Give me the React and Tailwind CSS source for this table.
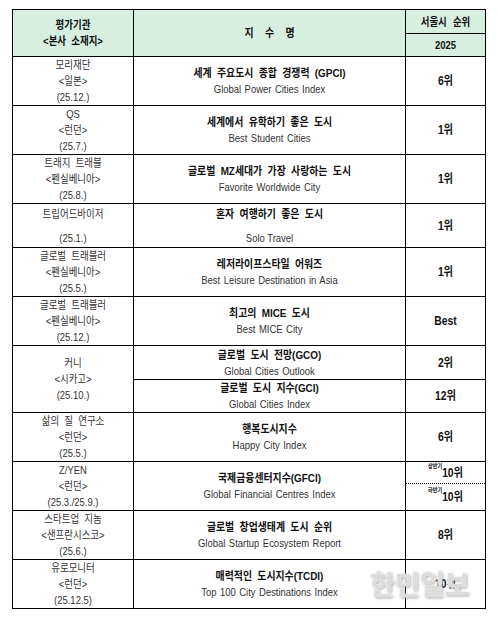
import React from 'react';

const cell = 'border border-black p-0 text-center align-middle';

const Sq = ({ className = '', children }) => (
  <div className={`scale-x-[0.86] leading-[16px] ${className}`}>{children}</div>
);

const Org = ({ lines }) => (
  <Sq className="text-[11px] text-[#333] [word-spacing:3px]">
    {lines.map((l, i) => (
      <div key={i}>{l}</div>
    ))}
  </Sq>
);

const Title = ({ ko, en }) => (
  <Sq>
    <div className="text-[11.5px] font-bold text-[#111] [word-spacing:3px]">{ko}</div>
    <div className="text-[11px] text-[#333] [word-spacing:1px]">{en}</div>
  </Sq>
);

const Rank = ({ children }) => (
  <Sq className="text-[12px] font-bold text-[#111]">{children}</Sq>
);

const rows = [
  { org: ['모리재단', '<일본>', '(25.12.)'], ko: '세계 주요도시 종합 경쟁력 (GPCI)', en: 'Global Power Cities Index', rank: '6위' },
  { org: ['QS', '<런던>', '(25.7.)'], ko: '세계에서 유학하기 좋은 도시', en: 'Best Student Cities', rank: '1위' },
  { org: ['트래지 트래블', '<펜실베니아>', '(25.8.)'], ko: '글로벌 MZ세대가 가장 사랑하는 도시', en: 'Favorite Worldwide City', rank: '1위' },
];

const rows2 = [
  { org: ['글로벌 트래블러', '<펜실베니아>', '(25.5.)'], ko: '레저라이프스타일 어워즈', en: 'Best Leisure Destination in Asia', rank: '1위' },
  { org: ['글로벌 트래블러', '<펜실베니아>', '(25.12.)'], ko: '최고의 MICE 도시', en: 'Best MICE City', rank: 'Best' },
];

export default function App() {
  return (
    <div className="relative min-h-[620px] bg-white pl-[12px] pt-[9px] font-['Liberation_Sans','Noto_Sans_CJK_KR',sans-serif]">
      <table className="w-[473px] table-fixed border-collapse border border-black">
        <colgroup>
          <col className="w-[121px]" />
          <col className="w-[272px]" />
          <col className="w-[80px]" />
        </colgroup>
        <tbody>
          <tr className="h-[24px] bg-[#d6efe0]">
            <td rowSpan={2} className={cell}>
              <Sq className="text-[11px] font-bold text-[#111] leading-[15px] [word-spacing:3px]">
                <div>평가기관</div>
                <div>&lt;본사 소재지&gt;</div>
              </Sq>
            </td>
            <td rowSpan={2} className={cell}>
              <Sq className="text-[11.5px] font-bold text-[#111] [word-spacing:10px]">지 수 명</Sq>
            </td>
            <td className={cell}>
              <Sq className="text-[11px] font-bold text-[#111] [word-spacing:4px]">서울시 순위</Sq>
            </td>
          </tr>
          <tr className="h-[23px] bg-[#d6efe0]">
            <td className={cell}>
              <Sq className="text-[11px] font-bold text-[#111]">2025</Sq>
            </td>
          </tr>

          {rows.map((r, i) => (
            <tr key={i} className="h-[49px]">
              <td className={cell}><Org lines={r.org} /></td>
              <td className={cell}><Title ko={r.ko} en={r.en} /></td>
              <td className={cell}><Rank>{r.rank}</Rank></td>
            </tr>
          ))}

          <tr className="h-[44px]">
            <td className={cell}>
              <Sq className="text-[11px] text-[#333] [word-spacing:3px]">
                <div>트립어드바이저</div>
                <div className="h-[8px]" />
                <div>(25.1.)</div>
              </Sq>
            </td>
            <td className={cell}>
              <Sq>
                <div className="text-[11.5px] font-bold text-[#111] [word-spacing:3px]">혼자 여행하기 좋은 도시</div>
                <div className="h-[8px]" />
                <div className="text-[11px] text-[#333]">Solo Travel</div>
              </Sq>
            </td>
            <td className={cell}><Rank>1위</Rank></td>
          </tr>

          {rows2.map((r, i) => (
            <tr key={i} className="h-[49px]">
              <td className={cell}><Org lines={r.org} /></td>
              <td className={cell}><Title ko={r.ko} en={r.en} /></td>
              <td className={cell}><Rank>{r.rank}</Rank></td>
            </tr>
          ))}

          <tr className="h-[34px]">
            <td rowSpan={2} className={cell}><Org lines={['커니', '<시카고>', '(25.10.)']} /></td>
            <td className={cell}><Title ko="글로벌 도시 전망(GCO)" en="Global Cities Outlook" /></td>
            <td className={cell}><Rank>2위</Rank></td>
          </tr>
          <tr className="h-[32px]">
            <td className={cell}><Title ko="글로벌 도시 지수(GCI)" en="Global Cities Index" /></td>
            <td className={cell}><Rank>12위</Rank></td>
          </tr>

          <tr className="h-[49px]">
            <td className={cell}><Org lines={['삶의 질 연구소', '<런던>', '(25.5.)']} /></td>
            <td className={cell}><Title ko="행복도시지수" en="Happy City Index" /></td>
            <td className={cell}><Rank>6위</Rank></td>
          </tr>

          {/* GFCI: 상반기 / 하반기 split by a dotted rule */}
          <tr className="h-[22px]">
            <td rowSpan={2} className={cell}><Org lines={['Z/YEN', '<런던>', '(25.3./25.9.)']} /></td>
            <td rowSpan={2} className={cell}><Title ko="국제금융센터지수(GFCI)" en="Global Financial Centres Index" /></td>
            <td className="border-x border-t border-b border-black [border-bottom-style:dotted] p-0 text-center align-middle">
              <Rank><sup className="text-[6px] align-[6px]">상반기</sup>10위</Rank>
            </td>
          </tr>
          <tr className="h-[27px]">
            <td className="border-x border-b border-black p-0 text-center align-middle">
              <Rank><sup className="text-[6px] align-[6px]">하반기</sup>10위</Rank>
            </td>
          </tr>

          <tr className="h-[49px]">
            <td className={cell}><Org lines={['스타트업 지놈', '<샌프란시스코>', '(25.6.)']} /></td>
            <td className={cell}><Title ko="글로벌 창업생태계 도시 순위" en="Global Startup Ecosystem Report" /></td>
            <td className={cell}><Rank>8위</Rank></td>
          </tr>

          <tr className="h-[49px]">
            <td className={cell}><Org lines={['유로모니터', '<런던>', '(25.12.5)']} /></td>
            <td className={cell}><Title ko="매력적인 도시지수(TCDI)" en="Top 100 City Destinations Index" /></td>
            <td className={cell}><Rank>10위</Rank></td>
          </tr>
        </tbody>
      </table>

      {/* watermark */}
      <div className="absolute left-[370px] top-[570px] text-[27px] font-bold leading-none text-[#dcdcdc] font-['Noto_Sans_CJK_KR',sans-serif] [text-shadow:0_0_1px_#fff,0_0_2px_#fff,1px_1px_3px_#8f8f8f]">
        한민일보
      </div>
    </div>
  );
}
